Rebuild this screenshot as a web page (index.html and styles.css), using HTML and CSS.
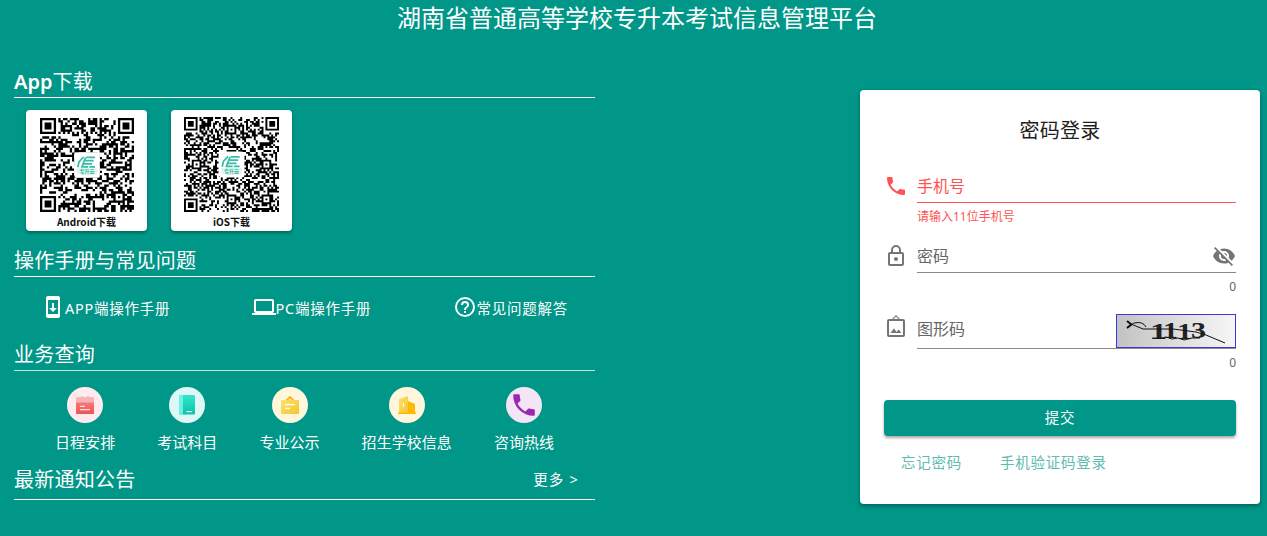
FILE: index.html
```html
<!DOCTYPE html>
<html lang="zh-CN">
<head>
<meta charset="utf-8">
<title>湖南省普通高等学校专升本考试信息管理平台</title>
<link rel="stylesheet" href="styles.css">
</head>
<body>
<h1 class="page-title">湖南省普通高等学校专升本考试信息管理平台</h1>
<div class="layout">
  <main class="info">
    <h2 class="heading heading-app"><b>App</b>下载</h2>
    <div class="codes">
      <div class="code-card">
        <svg class="qr qr-android" data-size="41" data-seed="7" viewBox="0 0 41 41"></svg>
        <span>Android下载</span>
      </div>
      <div class="code-card">
        <svg class="qr qr-ios" data-size="49" data-seed="23" viewBox="0 0 49 49"></svg>
        <span>iOS下载</span>
      </div>
    </div>

    <h2 class="heading heading-manual">操作手册与常见问题</h2>
    <div class="manuals">
      <a class="manual"><svg class="icon" viewBox="0 0 24 24"><path d="M17 1H7C5.9 1 5 1.9 5 3V21C5 22.1 5.9 23 7 23H17C18.1 23 19 22.1 19 21V3C19 1.9 18.1 1 17 1M17 19H7V5H17V19M16 13H13V8H11V13H8L12 17L16 13Z"/></svg>APP端操作手册</a>
      <a class="manual"><svg class="icon" viewBox="0 0 24 24"><path d="M4,6H20V16H4M20,18A2,2 0 0,0 22,16V6C22,4.89 21.1,4 20,4H4C2.89,4 2,4.89 2,6V16A2,2 0 0,0 4,18H0V20H24V18H20Z"/></svg>PC端操作手册</a>
      <a class="manual"><svg class="icon" viewBox="0 0 24 24"><path d="M11,18H13V16H11V18M12,2A10,10 0 0,0 2,12A10,10 0 0,0 12,22A10,10 0 0,0 22,12A10,10 0 0,0 12,2M12,20C7.59,20 4,16.41 4,12C4,7.59 7.59,4 12,4C16.41,4 20,7.59 20,12C20,16.41 16.41,20 12,20M12,6A4,4 0 0,0 8,10H10A2,2 0 0,1 12,8A2,2 0 0,1 14,10C14,12 11,11.75 11,15H13C13,12.75 16,12.5 16,10A4,4 0 0,0 12,6Z"/></svg>常见问题解答</a>
    </div>

    <h2 class="heading heading-query">业务查询</h2>
    <div class="queries">
      <a class="query"><svg class="round" viewBox="0 0 36 36">
        <defs><linearGradient id="red" x2="0" y2="1"><stop offset="0" stop-color="#f88a8a"/><stop offset="1" stop-color="#ec5353"/></linearGradient></defs>
        <circle cx="18" cy="18" r="18" fill="#ffebee"/>
        <rect x="9" y="10.5" width="18" height="16.5" rx="1" fill="url(#red)"/>
        <rect x="9" y="10.5" width="18" height="5" rx="1" fill="#f6b3b3"/>
        <path d="M15 9v3M21 9v3" stroke="#f6b3b3" stroke-width="1.6"/>
        <path d="M13 19.3h5M13 22.7h10" stroke="#fff" stroke-width="1"/></svg>日程安排</a>
      <a class="query"><svg class="round" viewBox="0 0 36 36">
        <defs><linearGradient id="green" x2="0" y2="1"><stop offset="0" stop-color="#36e6cc"/><stop offset="1" stop-color="#08c4a8"/></linearGradient></defs>
        <circle cx="18" cy="18" r="18" fill="#e0f7f7"/>
        <rect x="10" y="8" width="16" height="19.5" rx="1" fill="url(#green)"/>
        <path d="M11 8h3v19.5h-3a1 1 0 0 1-1-1V9a1 1 0 0 1 1-1z" fill="#6af3e4"/>
        <path d="M17.5 24.6H23" stroke="#fff" stroke-width="1.2"/></svg>考试科目</a>
      <a class="query"><svg class="round" viewBox="0 0 36 36">
        <defs><linearGradient id="gold" x2="1" y2="1"><stop offset="0" stop-color="#fce16f"/><stop offset="1" stop-color="#f4c62c"/></linearGradient></defs>
        <circle cx="18" cy="18" r="18" fill="#fff6dc"/>
        <path d="M14.500 13.500L18 10L21.500 13.500" fill="none" stroke="#ffb20d" stroke-width="1.800"/>
        <rect x="9" y="13" width="18" height="14" rx="1" fill="url(#gold)"/>
        <path d="M13 17.700h10M13 21.300h5" stroke="#fff" stroke-width="1.200"/></svg>专业公示</a>
      <a class="query"><svg class="round" viewBox="0 0 36 36">
        <circle cx="18" cy="18" r="18" fill="#fff6dc"/>
        <path d="M10 12l9-3v18h-9z" fill="url(#gold)"/>
        <path d="M19 14l7 3v10h-7z" fill="#ffb900"/><path d="M9 25.500h18V27H9z" fill="#ffb900"/>
        <path d="M14.500 16v4" stroke="#fff" stroke-width="1"/></svg>招生学校信息</a>
      <a class="query"><svg class="round" viewBox="0 0 36 36"><circle cx="18" cy="18" r="18" fill="#f3e5f5"/>
        <path transform="translate(3.6 3.6) scale(1.2)" fill="#9c27b0" d="M6.62,10.79C8.06,13.62 10.38,15.94 13.21,17.38L15.41,15.18C15.69,14.9 16.08,14.82 16.43,14.93C17.55,15.3 18.75,15.5 20,15.5A1,1 0 0,1 21,16.5V20A1,1 0 0,1 20,21A17,17 0 0,1 3,4A1,1 0 0,1 4,3H7.5A1,1 0 0,1 8.5,4C8.5,5.25 8.7,6.45 9.07,7.57C9.18,7.92 9.1,8.31 8.82,8.59L6.62,10.79Z"/></svg>咨询热线</a>
    </div>

    <div class="heading heading-news"><h2 class="news-title">最新通知公告</h2><a class="more">更多 &gt;</a></div>
  </main>

  <form class="login">
    <h2 class="login-title">密码登录</h2>
    <div class="row row-phone">
      <svg class="icon" viewBox="0 0 24 24"><path d="M6.62,10.79C8.06,13.62 10.38,15.94 13.21,17.38L15.41,15.18C15.69,14.9 16.08,14.82 16.43,14.93C17.55,15.3 18.75,15.5 20,15.5A1,1 0 0,1 21,16.5V20A1,1 0 0,1 20,21A17,17 0 0,1 3,4A1,1 0 0,1 4,3H7.5A1,1 0 0,1 8.5,4C8.5,5.25 8.7,6.45 9.07,7.57C9.18,7.92 9.1,8.31 8.82,8.59L6.62,10.79Z"/></svg>
      <div class="field"><div class="input">手机号</div><div class="hint">请输入11位手机号</div></div>
    </div>
    <div class="row row-password">
      <svg class="icon" viewBox="0 0 24 24"><path d="M12,17C10.89,17 10,16.1 10,15C10,13.89 10.89,13 12,13A2,2 0 0,1 14,15A2,2 0 0,1 12,17M18,20V10H6V20H18M18,8A2,2 0 0,1 20,10V20A2,2 0 0,1 18,22H6C4.89,22 4,21.1 4,20V10C4,8.89 4.89,8 6,8H7V6A5,5 0 0,1 12,1A5,5 0 0,1 17,6V8H18M12,3A3,3 0 0,0 9,6V8H15V6A3,3 0 0,0 12,3Z"/></svg>
      <div class="field"><div class="input">密码<svg class="icon" viewBox="0 0 24 24"><path d="M11.83,9L15,12.16C15,12.11 15,12.05 15,12A3,3 0 0,0 12,9C11.94,9 11.89,9 11.83,9M7.53,9.8L9.08,11.35C9.03,11.56 9,11.77 9,12A3,3 0 0,0 12,15C12.22,15 12.44,14.97 12.65,14.92L14.2,16.47C13.53,16.8 12.79,17 12,17A5,5 0 0,1 7,12C7,11.21 7.2,10.47 7.53,9.8M2,4.27L4.28,6.55L4.73,7C3.08,8.3 1.78,10 1,12C2.73,16.39 7,19.5 12,19.5C13.55,19.5 15.03,19.2 16.38,18.66L16.81,19.08L19.73,22L21,20.73L3.27,3M12,7A5,5 0 0,1 17,12C17,12.64 16.87,13.26 16.64,13.82L19.57,16.75C21.07,15.5 22.27,13.86 23,12C21.27,7.61 17,4.5 12,4.5C10.6,4.5 9.26,4.75 8,5.2L10.17,7.35C10.74,7.13 11.35,7 12,7Z"/></svg></div><div class="hint">0</div></div>
    </div>
    <div class="row row-captcha">
      <svg class="icon" viewBox="0 0 24 24"><path d="M10,14.29L6.5,19H17.46L14.75,15.58L12.36,17.91M5,21V7H18.96V21M5,5A2,2 0 0,0 3,7V21A2,2 0 0,0 5,23H19A2,2 0 0,0 21,21V7A2,2 0 0,0 19,5M12,1L8,5L8.7,5.7L12,2.4L15.3,5.7L16,5Z"/></svg>
      <div class="field"><div class="input">图形码
        <svg class="captcha" viewBox="0 0 120 34">
          <defs><linearGradient id="grey"><stop stop-color="#c2c2c2"/><stop offset="1" stop-color="#f7f7f7"/></linearGradient></defs>
          <rect x=".5" y=".5" width="119" height="33" fill="url(#grey)" stroke="#3c37d8"/>
          <g class="captcha-text"><text x="34" y="25" textLength="17" lengthAdjust="spacingAndGlyphs">1</text><text x="47" y="24" textLength="15" lengthAdjust="spacingAndGlyphs">1</text><text x="61" y="25" textLength="15" lengthAdjust="spacingAndGlyphs">1</text><text x="75" y="24" textLength="15" lengthAdjust="spacingAndGlyphs">3</text></g>
          <path d="M11 14l7-5q9-2 12 4M15 10l12 5h30l23 3 10 3 19 8M36 24l8 .5 6-1.500 6 2 6-1 6 2 8-2 8 0" fill="none" stroke="#111" stroke-width="1"/>
          <path d="M11 14l5-4M11 7l5 4" stroke="#111" stroke-width="2"/>
        </svg></div><div class="hint">0</div></div>
    </div>
    <button class="submit" type="button">提交</button>
    <div class="links"><a>忘记密码</a><a>手机验证码登录</a></div>
  </form>
</div>
<script src="qr.js"></script>
</body>
</html>
```
FILE: styles.css
```css
* { box-sizing: border-box; }
body {
  margin: 0;
  height: 536px;
  overflow: hidden;
  background: #009688;
  color: #fff;
  font-family: "Noto Sans", "Noto Sans CJK SC", sans-serif;
}
h1, h2 { margin: 0; font-weight: 400; }
svg { flex: none; }
.icon { width: 24px; height: 24px; fill: currentColor; }
.page-title {
  height: 36px;
  padding-left: 7px;
  font-size: 24px;
  line-height: 35px;
  text-align: center;
}
.layout { display: flex; justify-content: space-between; align-items: flex-start; padding: 0 7px 0 14px; }
.info { width: 581px; padding-top: 29px; }
.heading {
  height: 33px;
  border-bottom: 1px solid #fff;
  font-size: 20px;
  line-height: 33px;
  letter-spacing: .25px;
}
.heading b { font-weight: 600; letter-spacing: 0; }
.codes { display: flex; gap: 24px; padding: 12px 12px 0; }
.code-card {
  display: flex;
  flex-direction: column;
  justify-content: flex-end;
  align-items: center;
  width: 121px;
  height: 121px;
  padding-bottom: 3px;
  border-radius: 4px;
  background: #fff;
  box-shadow: 0 2px 3px rgba(0, 0, 0, .3);
  color: #111;
  font: 700 10px/13px "Noto Sans CJK SC", sans-serif;
}
.qr-android { width: 94px; height: 94px; margin-bottom: 3px; }
.qr-ios { width: 95px; height: 95px; margin-bottom: 3px; }
.qr-brand { font: 700 2.2px "Noto Sans CJK SC", sans-serif; fill: #37b9a5; text-anchor: middle; }
.heading-manual { margin-top: 13px; }
.manuals {
  display: flex;
  justify-content: space-between;
  padding: 18px 27px 0;
}
.manual {
  display: flex;
  align-items: center;
  height: 24px;
  font-size: 14.5px;
  letter-spacing: .75px;
}
.heading-query { margin-top: 19px; border-color: rgba(255, 255, 255, .75); }
.queries { display: flex; gap: 42px; padding: 16px 0 0 41px; }
.query {
  display: flex;
  flex-direction: column;
  align-items: center;
  gap: 8px;
  font-size: 15px;
  line-height: 22px;
  letter-spacing: .05px;
}
.round { width: 36px; height: 36px; }
.heading-news {
  display: flex;
  justify-content: space-between;
  height: 37px;
  margin-top: 10px;
  padding-right: 16px;
}
.news-title { font-size: 20px; line-height: 33px; }
.more { font-size: 14.5px; line-height: 33px; letter-spacing: 1.2px; }

.login {
  width: 400px;
  height: 414px;
  margin-top: 54px;
  padding: 24px;
  border-radius: 4px;
  background: #fff;
  box-shadow: 0 2px 4px rgba(0, 0, 0, .35);
  color: #666;
}
.login-title {
  color: #1e1e1e;
  font-size: 20px;
  line-height: 34px;
  height: 32px;
  letter-spacing: .25px;
  text-align: center;
}
.row { display: flex; gap: 9px; }
.row > .icon { color: #757575; }
.row-phone { margin-top: 28px; color: #ff5252; }
.row-phone > .icon { color: #ff5252; }
.field { flex: 1; }
.input {
  display: flex;
  justify-content: space-between;
  height: 29px;
  border-bottom: 1px solid #8b8b8b;
  font-size: 16px;
  line-height: 24px;
}
.input .icon { color: #757575; }
.row-phone .input { border-color: #ff5252; }
.hint { height: 12px; margin-top: 8px; font-size: 12px; line-height: 12px; }
.row-password { margin-top: 21px; }
.row-password .hint, .row-captcha .hint { text-align: right; }
.row-captcha { margin-top: 21px; }
.row-captcha .input { height: 35px; line-height: 30px; }
.captcha { width: 120px; height: 34px; }
.captcha-text { font: 700 23px "Liberation Serif", serif; fill: #222; }
.submit {
  display: block;
  width: 100%;
  height: 36px;
  margin-top: 31px;
  padding: 0 0 2px;
  border: 0;
  border-radius: 4px;
  background: #009688;
  box-shadow: 0 2px 3px rgba(0, 0, 0, .35);
  color: #fff;
  font: 400 14.5px/34px "Noto Sans CJK SC", sans-serif;
  letter-spacing: .75px;
}
.links {
  display: flex;
  gap: 38px;
  padding: 16px 17px;
  color: #60bbb2;
  font-size: 14.5px;
  line-height: 20px;
  letter-spacing: .75px;
}
```
FILE: qr.js
```js
// Draws a code of n x n modules with finder, timing and alignment patterns.
document.querySelectorAll('.qr').forEach(function (svg) {
  var n = +svg.dataset.size, state = +svg.dataset.seed, grid = [];
  function random() {
    state = (state * 1103515245 + 12345) % 2147483648;
    return state / 2147483648;
  }
  for (var y = 0; y < n; y++) {
    grid.push([]);
    for (var x = 0; x < n; x++) grid[y].push(random() < 0.5);
  }
  for (var i = 8; i < n - 8; i++) grid[6][i] = grid[i][6] = i % 2 === 0;
  function rings(cx, cy, reach, dark) {
    for (var dy = -reach; dy <= reach; dy++) for (var dx = -reach; dx <= reach; dx++) {
      var px = cx + dx, py = cy + dy;
      if (px >= 0 && py >= 0 && px < n && py < n) grid[py][px] = dark(Math.max(Math.abs(dx), Math.abs(dy)));
    }
  }
  function finder(d) { return d < 2 || d === 3; }
  rings(3, 3, 4, finder); rings(n - 4, 3, 4, finder); rings(3, n - 4, 4, finder);
  var spots = n === 49 ? [[24, 6], [6, 24], [42, 24], [24, 42], [42, 42]] : [[34, 34]];
  spots.forEach(function (s) { rings(s[0], s[1], 2, function (d) { return d !== 1; }); });
  var path = '';
  grid.forEach(function (row, y) {
    row.forEach(function (on, x) { if (on) path += 'M' + x + ' ' + y + 'h1v1h-1z'; });
  });
  svg.innerHTML = '<path d="' + path + '" fill="#000"/>' +
    '<g transform="translate(' + n / 2 + ' ' + n / 2 + ') scale(' + n / 41 + ')">' +
    '<rect x="-5.600" y="-5.600" width="11.200" height="11.200" rx="1.500" fill="#fff"/>' +
    '<path d="M-4.500 1.500h9v2.200q-4.500 1.700-9 0z" fill="#def5f0"/>' +
    '<path d="M-1.500-3.500l-2 2.200-.5 2.300M-.3-3.300h3.800M-1.300-1.900h4.200M-1.800-.5h4M-.6-3.300L-2.200.8H.5M1 .8h2.500" fill="none" stroke="#35bda8" stroke-width=".75"/>' +
    '<text class="qr-brand" x="0" y="3.500">专升云</text></g>';
});
```
